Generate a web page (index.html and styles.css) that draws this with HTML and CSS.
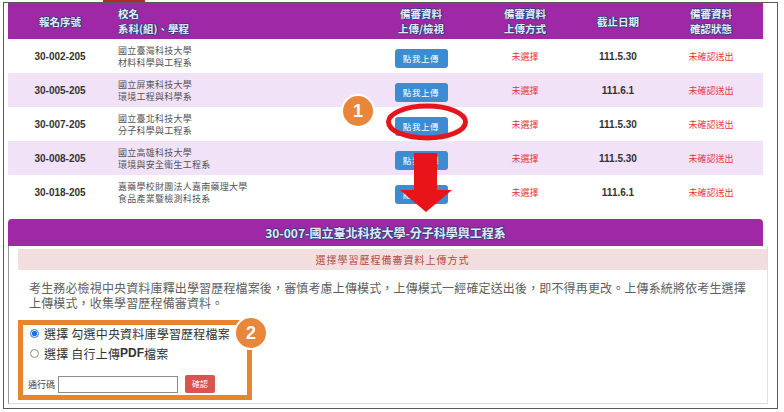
FILE: index.html
```html
<!DOCTYPE html>
<html lang="zh-Hant">
<head>
<meta charset="utf-8">
<title>備審資料上傳</title>
<link rel="stylesheet" href="styles.css">
</head>
<body>
<div class="tab"></div>
<div class="frame">
  <div class="table">
    <div class="row head">
      <div class="c c1">報名序號</div>
      <div class="c c2">校名<br>系科(組)、學程</div>
      <div class="c">備審資料<br>上傳/檢視</div>
      <div class="c">備審資料<br>上傳方式</div>
      <div class="c">截止日期</div>
      <div class="c">備審資料<br>確認狀態</div>
    </div>
    <div class="row">
      <div class="c c1 num">30-002-205</div>
      <div class="c c2 school">國立臺灣科技大學<br>材料科學與工程系</div>
      <div class="c"><span class="btn">點我上傳</span></div>
      <div class="c red">未選擇</div>
      <div class="c num">111.5.30</div>
      <div class="c red">未確認送出</div>
    </div>
    <div class="row alt">
      <div class="c c1 num">30-005-205</div>
      <div class="c c2 school">國立屏東科技大學<br>環境工程與科學系</div>
      <div class="c"><span class="btn">點我上傳</span></div>
      <div class="c red">未選擇</div>
      <div class="c num">111.6.1</div>
      <div class="c red">未確認送出</div>
    </div>
    <div class="row">
      <div class="c c1 num">30-007-205</div>
      <div class="c c2 school">國立臺北科技大學<br>分子科學與工程系</div>
      <div class="c"><span class="btn">點我上傳</span></div>
      <div class="c red">未選擇</div>
      <div class="c num">111.5.30</div>
      <div class="c red">未確認送出</div>
    </div>
    <div class="row alt">
      <div class="c c1 num">30-008-205</div>
      <div class="c c2 school">國立高雄科技大學<br>環境與安全衛生工程系</div>
      <div class="c"><span class="btn">點我上傳</span></div>
      <div class="c red">未選擇</div>
      <div class="c num">111.5.30</div>
      <div class="c red">未確認送出</div>
    </div>
    <div class="row">
      <div class="c c1 num">30-018-205</div>
      <div class="c c2 school">嘉藥學校財團法人嘉南藥理大學<br>食品產業暨檢測科技系</div>
      <div class="c"><span class="btn">點我上傳</span></div>
      <div class="c red">未選擇</div>
      <div class="c num">111.6.1</div>
      <div class="c red">未確認送出</div>
    </div>
  </div>

  <div class="title-bar">30-007-國立臺北科技大學-分子科學與工程系</div>
  <div class="panel">
    <div class="notice">選擇學習歷程備審資料上傳方式</div>
    <p class="para">考生務必檢視中央資料庫釋出學習歷程檔案後，審慎考慮上傳模式，上傳模式一經確定送出後，即不得再更改。上傳系統將依考生選擇上傳模式，收集學習歷程備審資料。</p>
    <div class="choice">
      <div class="opt"><span class="radio checked"></span>選擇 勾選中央資料庫學習歷程檔案</div>
      <div class="opt opt2"><span class="radio"></span>選擇 自行上傳<b>PDF</b>檔案</div>
      <div class="pass"><span class="pass-label">通行碼</span><span class="input"></span><span class="ok">確認</span></div>
      <div class="badge badge2">2</div>
    </div>
  </div>
</div>

<div class="badge badge1">1</div>
<svg class="ring" width="100" height="50" viewBox="0 0 100 50"><ellipse cx="47" cy="22" rx="38.5" ry="16" fill="none" stroke="#e3161d" stroke-width="5"/></svg>
<svg class="arrow" width="56" height="64" viewBox="0 0 56 64"><polygon points="16,3 39,3 39,40 54,40 28,62 2,40 16,40" fill="#e8141a"/></svg>
</body>
</html>
```

FILE: styles.css
```css
html, body {
  margin: 0;
  padding: 0;
  background: #fff;
}
body {
  position: relative;
  width: 784px;
  height: 412px;
  overflow: hidden;
  font-family: "Liberation Sans", "Noto Sans CJK TC", sans-serif;
}
.tab {
  position: absolute;
  left: 103px;
  top: 0;
  width: 42px;
  height: 2px;
  background: #b9262a;
}
.frame {
  box-sizing: border-box;
  margin: 2px 0 0 3px;
  width: 775px;
  height: 407px;
  border: 1px solid #5a5a5a;
  padding: 0 14px 0 4px;
}
.row {
  display: grid;
  grid-template-columns: 104px 257px 104px 104px 82px 104px;
  height: 34px;
  align-items: center;
  background: #fff;
}
.row.alt { background: #f1e2f8; }
.row.head {
  height: 36px;
  background: #9e28a6;
}
.c {
  text-align: center;
  font-size: 9px;
  line-height: 12px;
}
.c2 {
  text-align: left;
  padding-left: 6px;
}
.head .c {
  font-family: "Noto Sans CJK TC", sans-serif;
  font-size: 10.5px;
  font-weight: bold;
  line-height: 15px;
  color: #e3eaff;
  text-shadow: -1px 0 #33407a, 1px 0 #33407a, 0 -1px #33407a, 0 1px #33407a;
}
.num {
  font-size: 10px;
  font-weight: bold;
  color: #333;
  padding-top: 2px;
}
.school {
  font-family: "Noto Sans CJK TC", sans-serif;
  color: #555;
  letter-spacing: 0.25px;
  line-height: 12px;
  padding-top: 2px;
}
.red {
  font-family: "Noto Sans CJK TC", sans-serif;
  color: #e8323c;
  padding-top: 2px;
}
.btn {
  display: inline-block;
  width: 53px;
  height: 19px;
  line-height: 19px;
  border-radius: 3px;
  background: #3d8bd0;
  color: #fff;
  font-family: "Noto Sans CJK TC", sans-serif;
  font-size: 8.5px;
  letter-spacing: 0.6px;
  margin-top: 4px;
}
.title-bar {
  margin-top: 10px;
  height: 27px;
  line-height: 27px;
  background: #9e28a6;
  border-radius: 4px 4px 0 0;
  text-align: center;
  font-family: "Noto Sans CJK TC", sans-serif;
  font-size: 12px;
  font-weight: bold;
  color: #e3eaff;
  text-shadow: -1px 0 #33407a, 1px 0 #33407a, 0 -1px #33407a, 0 1px #33407a;
}
.panel {
  margin-right: -5px;
  border: 1px solid #e2dcdc;
  border-top: none;
  border-left-color: #9a9a9a;
  padding: 3px 0 3px 9px;
}
.notice {
  height: 21px;
  line-height: 21px;
  background: #f2dede;
  color: #b04a48;
  text-align: center;
  font-family: "Noto Sans CJK TC", sans-serif;
  font-size: 10px;
  letter-spacing: 1px;
}
.para {
  margin: 10px 0 0 0;
  padding: 0 16px 0 11px;
  font-family: "Noto Sans CJK TC", sans-serif;
  font-size: 12px;
  line-height: 15px;
  letter-spacing: 0.15px;
  color: #5e5e5e;
}
.choice {
  position: relative;
  box-sizing: border-box;
  margin-top: 10px;
  width: 234px;
  height: 80px;
  border: 5px solid #e8832e;
  padding: 0 0 0 7px;
}
.opt {
  height: 17px;
  line-height: 17px;
  font-family: "Noto Sans CJK TC", sans-serif;
  font-size: 12px;
  letter-spacing: 0.2px;
  color: #333;
  display: flex;
  align-items: center;
}
.opt2 { margin-top: 3px; }
.opt b { font-family: "Liberation Sans", sans-serif; font-weight: bold; letter-spacing: 0; }
.radio {
  box-sizing: border-box;
  width: 9px;
  height: 9px;
  border: 1px solid #8a8a8a;
  border-radius: 50%;
  margin-right: 5px;
  background: #fff;
}
.radio.checked {
  border-color: #1a73e8;
  background: radial-gradient(circle, #1a73e8 0 2.5px, #fff 3px);
}
.pass {
  margin-top: 13px;
  height: 18px;
  display: flex;
  align-items: center;
}
.pass-label {
  font-family: "Noto Sans CJK TC", sans-serif;
  font-size: 9px;
  color: #444;
  margin-left: -2px;
  margin-right: 3px;
}
.input {
  box-sizing: border-box;
  width: 120px;
  height: 17px;
  border: 1px solid #8c8c8c;
  background: #fff;
}
.ok {
  margin-left: 7px;
  width: 30px;
  height: 18px;
  line-height: 18px;
  border-radius: 2px;
  background: #d9534f;
  color: #fff;
  text-align: center;
  font-family: "Noto Sans CJK TC", sans-serif;
  font-size: 8px;
}
.badge {
  position: absolute;
  box-sizing: border-box;
  width: 34px;
  height: 34px;
  border-radius: 50%;
  border: 2px solid #fff;
  background: #e8863a;
  color: #fff;
  font-family: "Liberation Sans", sans-serif;
  font-weight: bold;
  font-size: 18px;
  line-height: 30px;
  text-align: center;
}
.badge1 { left: 341px; top: 94px; }
.badge2 { left: 211px; top: -9px; }
.ring {
  position: absolute;
  left: 380px;
  top: 100px;
}
.arrow {
  position: absolute;
  left: 398px;
  top: 150px;
}
```
